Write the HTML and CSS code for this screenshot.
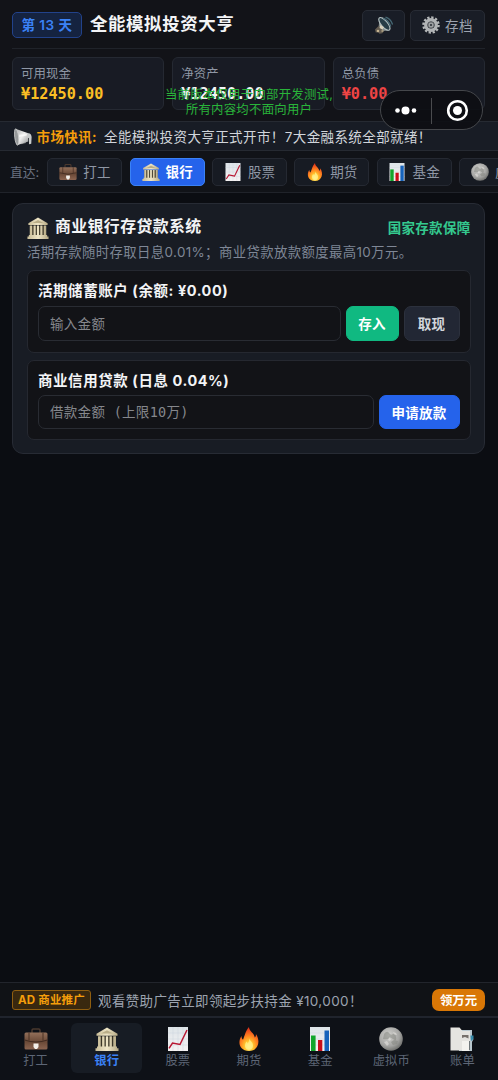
FILE: index.html
```html
<!DOCTYPE html>
<html lang="zh-CN">
<head>
<meta charset="utf-8">
<title>全能模拟投资大亨</title>
<link rel="stylesheet" href="styles.css">
</head>
<body>
<svg class="sprite" width="0" height="0" aria-hidden="true">
  <defs>
    <linearGradient id="g-case" x1="0" y1="0" x2="0" y2="1"><stop offset="0" stop-color="#93705a"/><stop offset=".55" stop-color="#6a4937"/><stop offset="1" stop-color="#8b6450"/></linearGradient>
    <linearGradient id="g-stone" x1="0" y1="0" x2="1" y2="0"><stop offset="0" stop-color="#c9bd98"/><stop offset=".5" stop-color="#eee5c6"/><stop offset="1" stop-color="#b6aa85"/></linearGradient>
    <linearGradient id="g-paper" x1="0" y1="0" x2="0" y2="1"><stop offset="0" stop-color="#dde4e8"/><stop offset="1" stop-color="#f6f3f3"/></linearGradient>
    <radialGradient id="g-fire" cx=".5" cy=".82" r=".75"><stop offset="0" stop-color="#fff7a0"/><stop offset=".3" stop-color="#ffc62e"/><stop offset=".6" stop-color="#ff8420"/><stop offset="1" stop-color="#e5371b"/></radialGradient>
    <radialGradient id="g-moon" cx=".4" cy=".35" r=".75"><stop offset="0" stop-color="#d2d2cf"/><stop offset=".6" stop-color="#a5a5a3"/><stop offset="1" stop-color="#5c5d5a"/></radialGradient>
    <linearGradient id="g-horn" x1="0" y1="0" x2="1" y2="1"><stop offset="0" stop-color="#a5a7a8"/><stop offset=".5" stop-color="#efefef"/><stop offset="1" stop-color="#8d8f91"/></linearGradient>
  </defs>
  <symbol id="case" viewBox="0 0 24 24">
    <path d="M8 6V3.200Q8 2 9.200 2h5.600Q16 2 16 3.200V6" fill="none" stroke="#4a382e" stroke-width="1.500"/>
    <rect x="0.500" y="5.500" width="23" height="17" rx="1.500" fill="url(#g-case)"/>
    <path d="M.5 13Q12 17 23.500 13" fill="none" stroke="#432c21" stroke-width="1.200"/>
    <path d="M5 5.500v8M19 5.500v8" stroke="#4b3225" stroke-width="1"/>
    <path d="M9.500 16.500h5v3.500L13 22h-2l-1.500-2z" fill="#f3efea"/>
  </symbol>
  <symbol id="bank" viewBox="0 0 24 24">
    <path d="M1.500 6.800 12 .5l10.500 6.300v2h-21z" fill="url(#g-stone)"/>
    <path d="M6 6.500 12 3.200l6 3.300z" fill="#b9ad88"/>
    <path d="M3.300 9.500h17.400V20H3.300z" fill="#3a3526"/>
    <path d="M3 9.200h2.700V20H3zM7.100 9.200h2.400V20H7.100zM10.800 9.200h2.400V20h-2.400zM14.500 9.200h2.400V20h-2.400zM18.300 9.200H21V20h-2.700z" fill="url(#g-stone)"/>
    <path d="M2 19.500h20v1.800h1.500V24H.5v-2.700H2z" fill="url(#g-stone)"/>
  </symbol>
  <symbol id="stock" viewBox="0 0 24 24">
    <rect x="2" width="20" height="24" fill="url(#g-paper)"/>
    <path d="M2 6h20M2 12h20M2 18h20M7 0v24M12 0v24M17 0v24" stroke="#c7d1d8" stroke-width=".4"/>
    <path d="M3 21.300 6.500 16l7.500 1.500L21 3" fill="none" stroke="#b91631" stroke-width="1.500"/>
  </symbol>
  <symbol id="fire" viewBox="0 0 24 24">
    <path d="M12 0c-.3 4 5.300 6 5.800 10.500 1-.9 1.300-2.200 1.100-3.500 5 7 2.500 17-6.900 17C2 24 .5 14.500 4.500 9c0 1.700.5 3 1.500 3.800C8 8 8.500 4 12 0z" fill="url(#g-fire)"/>
    <path d="M12 11c.8 3 4 3.600 4 7.500 0 6-8 5.500-8 .2 0-2.300 1-3.200 1.700-4.200l1 2C12 15 12.500 13 12 11z" fill="#fff08a" opacity=".8"/>
  </symbol>
  <symbol id="fund" viewBox="0 0 24 24">
    <rect x="2" width="20" height="24" fill="url(#g-paper)"/>
    <path d="M2 6h20M2 12h20M2 18h20" stroke="#c7d1d8" stroke-width=".4"/>
    <path d="M3 8.500h4.600V24H3z" fill="#12a62b"/><path d="M10 13h4.300v11H10z" fill="#c80f19"/><path d="M16.500 3.500H21V24h-4.500z" fill="#1763bb"/>
  </symbol>
  <symbol id="moon" viewBox="0 0 24 24">
    <circle cx="12" cy="12" r="11.800" fill="url(#g-moon)"/>
    <path d="M5 7q3-4 5-1t4 1 3 3-3 2-4-1-6 1zM12 15l3-2 4 1-1 3-4 1z" fill="#80817c" opacity=".5"/>
    <path d="m5 15 3-1 2 3-2 2zM14 5l3 1 1 2-3-.5zM10 11l2 1-1 2-2-1z" fill="#e4e3df" opacity=".6"/>
  </symbol>
  <symbol id="bill" viewBox="0 0 24 24">
    <path d="M9 3h13v8l1.500 1-1.500 3v9H9z" fill="#b9c8cf"/>
    <path d="M20.500 8.500h3v3.500L21 14z" fill="#3589a9"/>
    <path d="M.5.500h9l3 3.500H20v19.500H.5z" fill="#e5e4e0"/>
    <path d="M12 8h6.500v3.500l-3.500-1.500-3 1z" fill="#77716c"/><path d="M12 14h7v10h-7z" fill="#f3f2ee"/><path d="M19.500 14v9" stroke="#6e7578"/>
  </symbol>
  <symbol id="gear" viewBox="0 0 24 24">
    <circle cx="12" cy="12" r="10" fill="none" stroke="#b5b8b9" stroke-width="3.400" stroke-dasharray="3 2.236"/>
    <circle cx="12" cy="12" r="7" fill="none" stroke="#b0b3b5" stroke-width="4.500"/>
    <circle cx="12" cy="12" r="4" fill="#9da0a2" stroke="#62676a" stroke-width="1"/>
    <circle cx="12" cy="12" r="1.300" fill="#252a31"/>
  </symbol>
  <symbol id="speaker" viewBox="0 0 24 24">
    <path d="m0 18 5-5 6 5-1 5-4 .5-2-2-3 .5z" fill="#625b50"/>
    <path d="M5 13 6 2 19 19l-8 1z" fill="#87908f"/>
    <ellipse cx="12.500" cy="10.500" rx="4.300" ry="10.500" transform="rotate(-40 12.500 10.500)" fill="#273d47" stroke="#b4bfc0" stroke-width="1.600"/>
    <path d="M11 3q7 2 10 11M14 1.500q7 2 9.500 10" fill="none" stroke="#456773" stroke-width="1.800"/>
    <path d="m7 12 5 3-2 3-4-2z" fill="#d8d1bd"/><circle cx="4" cy="20" r="1.700" fill="#c7b591"/><circle cx="10" cy="20" r="1.600" fill="#a4977d"/>
  </symbol>
  <symbol id="horn" viewBox="0 0 24 24">
    <path d="m8 16 6-2 2 6-6 1.500z" fill="#777a7c"/>
    <path d="M2 1 19 7v11L4 23Q0 12 2 1z" fill="url(#g-horn)"/>
    <ellipse cx="3.500" cy="12" rx="2.600" ry="11" transform="rotate(-7 3.500 12)" fill="#96999b" stroke="#cfd0d0"/>
    <path d="M18 7q5-1 5.500 5l-.5 9-3 .5V13l-2 1z" fill="#c9cccd"/><path d="m7 9 10-1v2L7 12z" fill="#fff" opacity=".7"/>
  </symbol>
</svg>

<div class="app">
  <header class="header">
    <div class="topbar">
      <span class="day">第 13 天</span>
      <h1 class="title">全能模拟投资大亨</h1>
      <button class="tool tool-sound"><svg class="ico18"><use href="#speaker"/></svg></button>
      <button class="tool tool-save"><svg class="ico18"><use href="#gear"/></svg><span>存档</span></button>
    </div>
    <div class="stats">
      <div class="stat"><span class="stat-label">可用现金</span><span class="money gold">¥12450.00</span></div>
      <div class="stat"><span class="stat-label">净资产</span><span class="money">¥12450.00</span></div>
      <div class="stat"><span class="stat-label">总负债</span><span class="money red">¥0.00</span></div>
    </div>
  </header>

  <div class="ticker"><svg class="ico18"><use href="#horn"/></svg><b>市场快讯:</b><span>全能模拟投资大亨正式开市！7大金融系统全部就绪！</span></div>

  <nav class="shortcuts">
    <span class="shortcuts-label">直达:</span>
    <a class="chip"><svg class="ico18"><use href="#case"/></svg><span>打工</span></a>
    <a class="chip chip-on"><svg class="ico18"><use href="#bank"/></svg><span>银行</span></a>
    <a class="chip"><svg class="ico18"><use href="#stock"/></svg><span>股票</span></a>
    <a class="chip"><svg class="ico18"><use href="#fire"/></svg><span>期货</span></a>
    <a class="chip"><svg class="ico18"><use href="#fund"/></svg><span>基金</span></a>
    <a class="chip chip-wide"><svg class="ico18"><use href="#moon"/></svg><span>虚拟币</span></a>
  </nav>

  <main class="main">
    <section class="panel">
      <div class="panel-head"><svg class="ico22"><use href="#bank"/></svg><h2>商业银行存贷款系统</h2><span class="guarantee">国家存款保障</span></div>
      <p class="desc">活期存款随时存取日息0.01%；商业贷款放款额度最高10万元。</p>
      <div class="box">
        <h3>活期储蓄账户 (余额: ¥0.00)</h3>
        <div class="row"><input class="field" placeholder="输入金额"><button class="btn green">存入</button><button class="btn grey">取现</button></div>
      </div>
      <div class="box box-loan">
        <h3>商业信用贷款 (日息 0.04%)</h3>
        <div class="row"><input class="field" placeholder="借款金额 (上限10万)"><button class="btn blue">申请放款</button></div>
      </div>
    </section>
  </main>

  <div class="ad"><span class="ad-tag">AD 商业推广</span><span class="ad-text">观看赞助广告立即领起步扶持金 ¥10,000！</span><button class="ad-btn">领万元</button></div>

  <nav class="tabs">
    <a class="tab"><svg class="ico24"><use href="#case"/></svg><span>打工</span></a>
    <a class="tab tab-on"><svg class="ico24"><use href="#bank"/></svg><span>银行</span></a>
    <a class="tab"><svg class="ico24"><use href="#stock"/></svg><span>股票</span></a>
    <a class="tab"><svg class="ico24"><use href="#fire"/></svg><span>期货</span></a>
    <a class="tab"><svg class="ico24"><use href="#fund"/></svg><span>基金</span></a>
    <a class="tab"><svg class="ico24"><use href="#moon"/></svg><span>虚拟币</span></a>
    <a class="tab"><svg class="ico24"><use href="#bill"/></svg><span>账单</span></a>
  </nav>

  <div class="notice">当前版本仅用于内部开发测试,<br>所有内容均不面向用户</div>
  <div class="capsule"><svg width="102" height="40" viewBox="0 0 102 40"><g fill="#fff"><circle cx="16.500" cy="19.500" r="2.300"/><circle cx="24.500" cy="19.500" r="4"/><circle cx="33" cy="19.500" r="2.300"/><circle cx="76.500" cy="19.500" r="4.500"/></g><path d="M50.500 7v26" stroke="#4a4b4e"/><circle cx="76.500" cy="19.500" r="9.300" fill="none" stroke="#fff" stroke-width="2.600"/></svg></div>
</div>
</body>
</html>
```
FILE: styles.css
```css
* { box-sizing: border-box; }
body {
  margin: 0;
  background: #0b0d12;
  color: #f3f4f6;
  font-family: Inter, "Noto Sans CJK SC", sans-serif;
  overflow: hidden;
}
button, input { font-family: inherit; margin: 0; }
h1, h2, h3, p { margin: 0; }
svg { display: block; flex: none; }
.sprite { position: absolute; }
.ico18 { width: 18px; height: 18px; }
.ico22 { width: 22px; height: 22px; }
.ico24 { width: 24px; height: 24px; }
.app { position: relative; display: flex; flex-direction: column; width: 498px; height: 1080px; overflow: hidden; white-space: nowrap; }

.header { height: 121px; padding: 0 13px 0 12px; background: #121318; }
.topbar { display: flex; align-items: center; height: 49px; padding-top: 2px; border-bottom: 1px solid #20232a; }
.day { width: 70px; height: 26px; line-height: 24px; border: 1px solid #22428a; border-radius: 5px; background: #152340; color: #3b82f6; font-size: 13.500px; font-weight: 600; letter-spacing: .5px; text-align: center; }
.title { flex: 1; margin-left: 8px; font-size: 17.400px; line-height: 24px; padding-bottom: 2px; font-weight: 700; letter-spacing: .65px; }
.tool { display: flex; align-items: center; justify-content: center; height: 31px; padding: 0; border: 1px solid #272b34; border-radius: 5px; background: #191d26; color: #9ca3af; font-size: 13.500px; letter-spacing: .4px; }
.tool span { padding-bottom: 1px; }
.tool-sound { width: 43px; margin-right: 5px; }
.tool-save { width: 75px; gap: 5px; }
.stats { display: grid; grid-template-columns: repeat(3, 1fr); gap: 8px; padding-top: 8px; }
.stat { display: flex; flex-direction: column; height: 53px; padding: 6px 8px; border: 1px solid #252932; border-radius: 6px; background: #181b24; }
.stat-label { height: 20px; line-height: 19px; font-size: 12.400px; letter-spacing: .1px; color: #8f97a5; }
.money { line-height: 22px; font-family: "DejaVu Sans Mono", monospace; font-size: 15.200px; font-weight: 700; }
.gold { color: #fbbf24; }
.red { color: #ef4444; }

.ticker { display: flex; align-items: center; height: 30px; padding-left: 13.500px; border-top: 1px solid #262a32; border-bottom: 1px solid #262a32; background: #181c25; color: #d1d5db; font-size: 13.500px; letter-spacing: .4px; }
.ticker b { margin: 0 7px 0 5px; color: #f59e0b; font-weight: 700; }
.ticker .ico18 { margin-top: 1px; }

.shortcuts { display: flex; align-items: center; height: 42px; padding-left: 10px; border-bottom: 1px solid #20232a; background: #111318; }
.shortcuts-label { flex: none; width: 37px; font-size: 12.800px; color: #6b7280; }
.chip { display: flex; flex: none; align-items: center; justify-content: center; gap: 6px; width: 75px; height: 28px; margin-right: 7.300px; border: 1px solid #252932; border-radius: 5px; background: #171b23; color: #8f97a5; font-size: 13.500px; letter-spacing: .2px; }
.chip span { padding-bottom: 1px; }
.shortcuts-label + .chip { margin-left: .3px; }
.chip-on { background: #2563eb; border-color: #3b82f6; color: #fff; font-weight: 700; }
.chip-wide { width: 89px; }
.shortcuts { column-gap: 0; }
.shortcuts-label { width: 37.200px; }

.main { flex: 1; padding: 10px 13px 10px 12px; }
.panel { height: 251px; padding: 12px 13.500px 13px 14px; border: 1px solid #272b34; border-radius: 11px; background: #181c24; }
.panel-head { display: flex; align-items: center; height: 24px; }
.panel-head h2 { flex: 1; margin-left: 6px; line-height: 22px; padding-bottom: 2px; font-size: 15.900px; font-weight: 700; letter-spacing: .4px; }
.guarantee { color: #34c98f; font-size: 13.500px; line-height: 20px; padding-bottom: 1px; font-weight: 700; letter-spacing: .3px; }
.desc { height: 30px; line-height: 25px; color: #7f8796; font-size: 13.400px; letter-spacing: .37px; }
.box { height: 83px; padding: 10px; border: 1px solid #252830; border-radius: 7px; background: #121317; }
.box-loan { height: 80px; margin-top: 7px; }
.box h3 { height: 25px; line-height: 20px; font-size: 14.500px; font-weight: 700; letter-spacing: .56px; }
.box-loan h3 { height: 24px; }
.row { display: flex; gap: 5px; height: 35px; }
.box-loan .row { height: 34px; }
.field { flex: 1; min-width: 0; padding: 0 11px; border: 1px solid #292c33; border-radius: 7px; background: #121317; color: #e5e7eb; font-family: "DejaVu Sans Mono", "Noto Sans CJK SC", monospace; font-size: 13.500px; letter-spacing: .3px; }
.field::placeholder { color: #85878c; }
.btn { padding: 0 0 1px; border: 1px solid transparent; border-radius: 7px; color: #fff; font-size: 13.500px; font-weight: 700; letter-spacing: .3px; }
.green { width: 53px; background: #10b981; background-clip: border-box; border-color: #10b981; }
.grey { width: 56px; background: #222734; border-color: #2c313d; color: #d1d5db; }
.blue { width: 81px; background: #2563eb; border-color: #2563eb; }

.ad { display: flex; align-items: center; height: 34px; padding: 0 13px 0 12px; border-top: 1px solid #22252c; background: #101216; }
.ad-tag { width: 79px; height: 20px; line-height: 18px; border: 1px solid #8f5e10; border-radius: 3px; background: #39280f; color: #f59e0b; font-size: 11.500px; font-weight: 700; letter-spacing: .2px; text-align: center; }
.ad-text { flex: 1; margin-left: 7px; color: #9ca3af; font-size: 13.500px; letter-spacing: .36px; }
.ad-btn { width: 53px; height: 22px; padding: 0; border: 0; border-radius: 7px; background: #d97706; color: #fff; font-size: 12.400px; font-weight: 700; }
.tabs { display: grid; grid-template-columns: repeat(7, 71.150px); height: 64px; padding-top: 5px; border-top: 2px solid #20242d; background: #0e1117; }
.tab { display: flex; flex-direction: column; align-items: center; height: 50px; padding-top: 4px; border-radius: 6px; color: #5d6676; font-size: 12.300px; line-height: 19px; letter-spacing: .1px; }
.tab-on { background: #171c24; color: #3b82f6; font-weight: 700; }

/* Developer notice and host capsule float above the page. */
.notice { position: absolute; top: 87px; left: 149px; width: 200px; color: #29b43a; font-size: 12.400px; line-height: 15px; letter-spacing: .25px; text-align: center; }
.capsule { position: absolute; top: 90px; left: 380px; width: 103px; height: 40px; overflow: hidden; border: 1px solid #45474b; border-radius: 20px; background: rgba(13, 14, 18, .88); }
```
